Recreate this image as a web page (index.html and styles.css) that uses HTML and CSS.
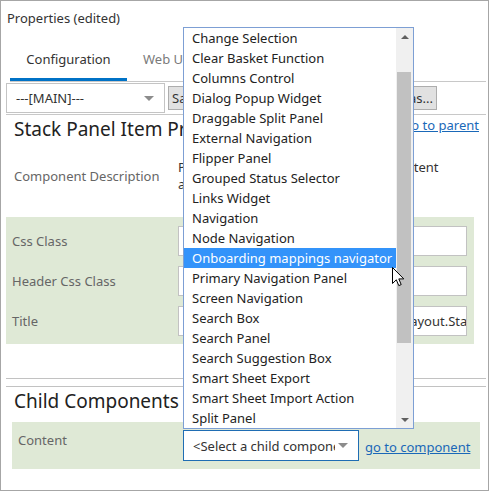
FILE: index.html
```html
<!DOCTYPE html>
<html>
<head>
<meta charset="utf-8">
<link rel="stylesheet" href="styles.css">
</head>
<body>
<div class="frame">
  <div class="title">Properties (edited)</div>
  <div class="tabs">
    <div class="tab active">Configuration</div>
    <div class="tab">Web UI</div>
  </div>
  <div class="toolbar">
    <div class="select main"><span>---[MAIN]---</span><span class="caret"></span></div>
    <button class="btn">Save</button>
    <button class="btn">Reset</button>
    <button class="btn last">Save as...</button>
  </div>
  <div class="heading">
    <h2>Stack Panel Item Properties</h2>
    <a href="#" class="link">go to parent</a>
  </div>
  <div class="desc">
    <div class="label">Component Description</div>
    <div class="value">Part representing stack panel item content<br>and its header</div>
  </div>
  <div class="props">
    <div class="label">Css Class</div>
    <div class="input"></div>
    <div class="label">Header Css Class</div>
    <div class="input"></div>
    <div class="label">Title</div>
    <div class="input scrolled">Sitecore.XA.Foundation.Layout.StackPanel</div>
  </div>
  <div class="sep"></div>
  <h2 class="child-heading">Child Components</h2>
  <div class="child-row">
    <div class="label">Content</div>
    <div class="select child"><span class="sel-text">&lt;Select a child component&gt;</span><span class="caret"></span></div>
    <a href="#" class="link comp">go to component</a>
  </div>

  <div class="dropdown">
    <ul class="list">
      <li>Change Selection</li>
      <li>Clear Basket Function</li>
      <li>Columns Control</li>
      <li>Dialog Popup Widget</li>
      <li>Draggable Split Panel</li>
      <li>External Navigation</li>
      <li>Flipper Panel</li>
      <li>Grouped Status Selector</li>
      <li>Links Widget</li>
      <li>Navigation</li>
      <li>Node Navigation</li>
      <li class="hl">Onboarding mappings navigator</li>
      <li>Primary Navigation Panel</li>
      <li>Screen Navigation</li>
      <li>Search Box</li>
      <li>Search Panel</li>
      <li>Search Suggestion Box</li>
      <li>Smart Sheet Export</li>
      <li>Smart Sheet Import Action</li>
      <li>Split Panel</li>
    </ul>
    <div class="scrollbar">
      <div class="sb-btn"><span class="tri up"></span></div>
      <div class="track"><div class="thumb"></div></div>
      <div class="sb-btn"><span class="tri down"></span></div>
    </div>
  </div>

  <svg class="cursor" width="13" height="20" viewBox="0 0 13 20">
    <path d="M0.5 0.5 L0.5 16.5 L4.3 12.8 L6.8 18.6 L9.2 17.6 L6.8 11.9 L11.8 11.9 Z" fill="#fff" stroke="#000" stroke-width="1" stroke-linejoin="miter"/>
  </svg>
</div>
</body>
</html>
```
FILE: styles.css
```css
* { box-sizing: border-box; }
body {
  margin: 0;
  font-family: "Noto Sans", sans-serif;
  font-size: 13px;
  color: #333;
  background: #fff;
}
.frame {
  position: relative;
  width: 489px;
  height: 491px;
  border: 1px solid #a6a6a6;
  overflow: hidden;
}
.title {
  height: 27px;
  padding: 7px 0 0 6px;
  line-height: 20px;
  color: #333;
}
.tabs {
  display: flex;
  margin: 13px 2px 0 9px;
  border-bottom: 1px solid #c8c8c8;
}
.tab {
  height: 40px;
  line-height: 37px;
  color: #7a7a7a;
  padding-left: 16px;
}
.tab.active {
  width: 117px;
  padding: 0;
  text-align: center;
  color: #333;
  border-bottom: 3px solid #0072c6;
}
.toolbar {
  display: flex;
  align-items: center;
  gap: 3px;
  margin: 0 2px 0 5px;
  padding: 1px 49px 1px 0;
  border-bottom: 1px solid #c8c8c8;
}
.select {
  display: flex;
  align-items: center;
  justify-content: space-between;
  background: #fff;
}
.select.main {
  width: 159px;
  height: 30px;
  border: 1px solid #c4c4c4;
  padding: 0 10px 0 9px;
  color: #333;
}
.caret {
  width: 0;
  height: 0;
  border-left: 5px solid transparent;
  border-right: 5px solid transparent;
  border-top: 5px solid #8c8c8c;
  flex: none;
}
.btn {
  height: 24px;
  padding: 0 3px;
  border: 1px solid #adadad;
  background: #e1e1e1;
  font: inherit;
  color: #333;
}
.btn.last { margin-left: auto; }
.heading {
  display: flex;
  justify-content: space-between;
  align-items: flex-start;
  padding: 0 9px 0 13px;
}
h2 {
  margin: 0;
  font-size: 19px;
  font-weight: normal;
  line-height: 28px;
  color: #222;
  white-space: nowrap;
}
.link {
  line-height: 20px;
  color: #1a68b8;
  text-decoration: underline;
}
.label { color: #666; }
.desc {
  display: grid;
  grid-template-columns: 164px 289px;
  align-items: center;
  margin-top: 16px;
  padding-left: 13px;
}
.desc .value {
  line-height: 17px;
  color: #333;
  white-space: nowrap;
}
.props {
  display: grid;
  grid-template-columns: 166px 289px;
  row-gap: 10px;
  align-items: center;
  width: 468px;
  margin: 24px 0 0 5px;
  padding: 9px 7px 8px 6px;
  background: #dfe9d6;
}
.input {
  height: 30px;
  border: 1px solid #c2c2c2;
  background: #fff;
  padding: 0 6px;
  line-height: 28px;
  white-space: nowrap;
  overflow: hidden;
  color: #333;
}
.input.scrolled { text-indent: 73px; }
.sep {
  height: 9px;
  margin: 34px 2px 0 5px;
  border-top: 1px solid #c2c2c2;
  border-bottom: 1px solid #c2c2c2;
}
.child-heading { padding-left: 13px; }
.child-row {
  display: flex;
  align-items: flex-start;
  width: 468px;
  height: 47px;
  margin: 7px 0 0 11px;
  padding: 8px 0 0 6px;
  background: #dfe9d6;
}
.child-row .label {
  width: 165px;
  line-height: 20px;
}
.select.child {
  width: 176px;
  height: 31px;
  border: 1px solid #1f6db3;
  padding: 0 10px 0 9px;
  color: #333;
}
.sel-text {
  width: 142px;
  overflow: hidden;
  white-space: nowrap;
}
.link.comp {
  margin: 7px 0 0 6px;
}
.dropdown {
  position: absolute;
  left: 182px;
  top: 26px;
  width: 231px;
  height: 402px;
  display: flex;
  border: 1px solid #7d9fd4;
  background: #fff;
}
.list {
  flex: 1;
  margin: 0;
  padding: 0;
  list-style: none;
}
.list li {
  height: 20px;
  line-height: 20px;
  padding-left: 8px;
  color: #222;
  white-space: nowrap;
}
.list li.hl {
  background: #3393fa;
  color: #fff;
}
.scrollbar {
  width: 17px;
  display: flex;
  flex-direction: column;
  background: #f0f0f0;
}
.sb-btn {
  height: 17px;
  display: flex;
  align-items: center;
  justify-content: center;
}
.tri {
  width: 0;
  height: 0;
  border-left: 4px solid transparent;
  border-right: 4px solid transparent;
}
.tri.up { border-bottom: 4px solid #606060; }
.tri.down { border-top: 4px solid #606060; }
.track { flex: 1; }
.thumb {
  margin: 27px 2px 0 1px;
  height: 271px;
  background: #c1c1c1;
}
.cursor {
  position: absolute;
  left: 391px;
  top: 266px;
}
```
